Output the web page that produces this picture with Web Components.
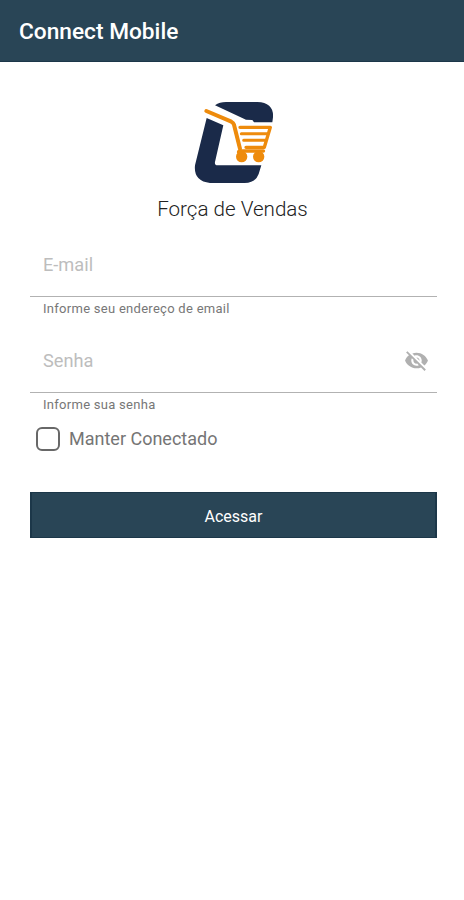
<!DOCTYPE html>
<html lang="pt-BR">
<head>
<meta charset="utf-8">
<meta name="viewport" content="width=device-width, initial-scale=1">
<title>Connect Mobile</title>
<style>
  html, body { margin: 0; height: 100%; background: #fff; }
  body { font-family: Roboto, "Liberation Sans", sans-serif; --brand: #294556; overflow: hidden; }
</style>
</head>
<body>
<login-screen></login-screen>

<script>
(function () {
  const define = (name, html) => {
    if (customElements.get(name)) return;
    customElements.define(name, class extends HTMLElement {
      constructor() {
        super();
        this.attachShadow({ mode: 'open' }).innerHTML = html;
      }
    });
  };

  define('app-bar', `
    <style>
      :host {
        display: flex;
        align-items: center;
        box-sizing: border-box;
        height: 62px;
        padding: 3px 19px 0;
        background: var(--brand);
        border-bottom: 1px solid #1c3749;
        color: #fff;
        font-size: 22.7px;
        font-weight: 500;
        line-height: 28px;
        white-space: nowrap;
      }
    </style>
    <slot></slot>`);

  define('brand-logo', `
    <style>
      :host { display: flex; flex-direction: column; align-items: center; }
      svg { display: block; margin-left: 3px; }
      .name {
        margin: 5px 2px 0 0;
        color: #222;
        font-size: 20.6px;
        font-weight: 300;
        line-height: 28px;
      }
    </style>
    <svg width="110" height="100" viewBox="0 0 330 300" fill="none" aria-hidden="true">
      <path fill="#1a2a49" d="M105 46Q119 36 138 36H232Q282 38 279 82L277 97H222L217 90L198 89Z"/>
      <path fill="#1a2a49" d="M80 84L130 106L105 216Q103 226 113 226H244L236 252Q226 279 194 279H90Q40 274 45 226Z"/>
      <g stroke="#ee8b0c" stroke-linecap="round" stroke-linejoin="round">
        <path stroke-width="12" d="M79 63L154 95Q160 98 162 104L180 176"/>
        <path stroke-width="10" d="M180 112H271L253 172H198"/>
        <path stroke-width="9" d="M184 131H262M191 151H256"/>
        <path stroke-width="11" d="M176 187Q176 183 182 183H250"/>
      </g>
      <circle cx="185" cy="200" r="17" fill="#ee8b0c"/>
      <circle cx="236" cy="200" r="17" fill="#ee8b0c"/>
    </svg>
    <div class="name"><slot></slot></div>`);

  define('text-field', `
    <style>
      :host { display: block; height: 96px; }
      .box {
        display: flex;
        align-items: center;
        justify-content: space-between;
        box-sizing: border-box;
        height: 66px;
        padding: 2px 8px 0 13px;
        border-bottom: 1px solid #b2b2b2;
        color: #bdbdbd;
        font-size: 18.2px;
        line-height: 24px;
      }
      .hint {
        padding: 4px 0 0 13px;
        color: #777;
        font-size: 13px;
        line-height: 16px;
        letter-spacing: .28px;
      }
    </style>
    <div class="box"><slot name="label"></slot><slot name="icon"></slot></div>
    <div class="hint"><slot></slot></div>`);

  define('eye-off-icon', `
    <style>
      :host { display: block; }
      svg { display: block; }
    </style>
    <svg width="25" height="25" viewBox="0 0 24 24" fill="#b0b0b0" aria-hidden="true">
      <path d="M12 7c2.76 0 5 2.24 5 5 0 .65-.13 1.26-.36 1.83l2.92 2.92c1.51-1.26 2.7-2.89 3.43-4.75-1.73-4.39-6-7.5-11-7.5-1.4 0-2.74.25-3.98.7l2.16 2.16C10.74 7.13 11.35 7 12 7zM2 4.27l2.28 2.28.46.46C3.08 8.3 1.78 10.02 1 12c1.73 4.39 6 7.5 11 7.5 1.55 0 3.03-.3 4.38-.84l.42.42L19.73 22 21 20.73 3.27 3 2 4.27zM7.53 9.8l1.55 1.55c-.05.21-.08.43-.08.65 0 1.66 1.34 3 3 3 .22 0 .44-.03.65-.08l1.55 1.55c-.67.33-1.41.53-2.2.53-2.76 0-5-2.24-5-5 0-.79.2-1.53.53-2.2zm4.31-.78l3.15 3.15.02-.16c0-1.66-1.34-3-3-3l-.17.01z"/>
    </svg>`);

  define('check-option', `
    <style>
      :host {
        display: flex;
        align-items: center;
        gap: 9px;
        height: 26px;
        padding-left: 6px;
        color: #757575;
        font-size: 18px;
        line-height: 24px;
      }
      .mark {
        box-sizing: border-box;
        width: 24px;
        height: 24px;
        border: 2px solid #686868;
        border-radius: 6px;
      }
    </style>
    <span class="mark"></span><span><slot></slot></span>`);

  define('action-button', `
    <style>
      :host {
        display: flex;
        align-items: center;
        justify-content: center;
        box-sizing: border-box;
        height: 46px;
        padding-top: 3px;
        background: var(--brand);
        border: 1px solid #1c3749;
        border-width: 1px 2px;
        color: #fff;
        font-size: 16px;
        line-height: 20px;
      }
    </style>
    <slot></slot>`);

  define('login-screen', `
    <style>
      :host { display: block; }
      main { display: flex; flex-direction: column; padding: 28px 27px 0 30px; }
      brand-logo { margin-bottom: 8px; }
      check-option { margin-top: 3px; }
      action-button { margin-top: 40px; }
    </style>
    <app-bar>Connect Mobile</app-bar>
    <main>
      <brand-logo>Força de Vendas</brand-logo>
      <text-field><span slot="label">E-mail</span>Informe seu endereço de email</text-field>
      <text-field>
        <span slot="label">Senha</span>
        <eye-off-icon slot="icon"></eye-off-icon>Informe sua senha
      </text-field>
      <check-option>Manter Conectado</check-option>
      <action-button>Acessar</action-button>
    </main>`);
})();
</script>
</body>
</html>
